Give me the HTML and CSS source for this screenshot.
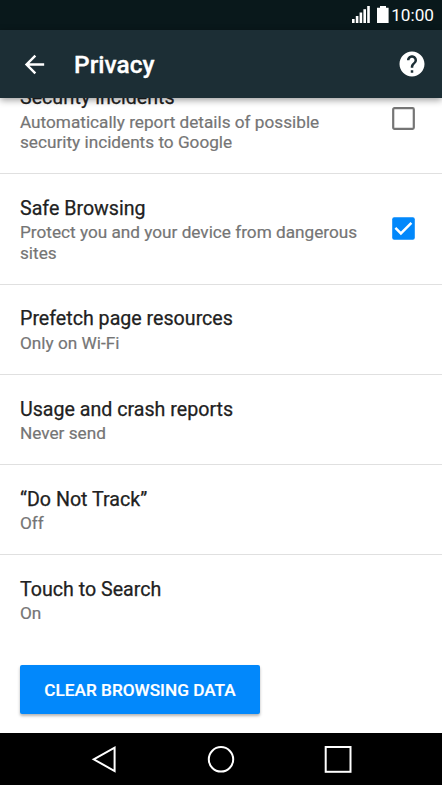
FILE: index.html
```
<!DOCTYPE html>
<html lang="en">
<head>
    <meta charset="UTF-8">
    <meta name="viewport" content="width=device-width, initial-scale=1.0">
    <title>Privacy</title>
    <link rel="stylesheet" href="styles.css">
</head>
<body>
    <div class="statusbar">
        <svg class="signal" width="18" height="17" viewBox="0 0 18 17" fill="#fff">
            <rect x="0" y="13" width="2.6" height="4"/>
            <rect x="3.8" y="10" width="2.6" height="7"/>
            <rect x="7.6" y="6.5" width="2.6" height="10.5"/>
            <rect x="11.4" y="3.2" width="2.6" height="13.8"/>
            <rect x="15.2" y="0" width="2.6" height="17"/>
        </svg>
        <svg class="battery" width="12" height="17" viewBox="0 0 12 17" fill="#fff">
            <path d="M3 0h6v1.8h2.6V17H0V1.8h3z"/>
        </svg>
        <span class="clock">10:00</span>
    </div>

    <header>
        <svg class="back" width="29" height="29" viewBox="0 0 24 24" fill="#fff">
            <path d="M20 11H7.83l5.59-5.59L12 4l-8 8 8 8 1.41-1.41L7.83 13H20v-2z"/>
        </svg>
        <h1>Privacy</h1>
        <svg class="help" width="30" height="30" viewBox="0 0 24 24" fill="#fff">
            <path d="M12 2C6.48 2 2 6.48 2 12s4.48 10 10 10 10-4.48 10-10S17.52 2 12 2zm1 17h-2v-2h2v2zm2.07-7.75l-.9.92C13.45 12.9 13 13.5 13 15h-2v-.5c0-1.1.45-2.1 1.17-2.83l1.24-1.26c.37-.36.59-.86.59-1.41 0-1.1-.9-2-2-2s-2 .9-2 2H8c0-2.21 1.79-4 4-4s4 1.79 4 4c0 .88-.36 1.68-.93 2.25z"/>
        </svg>
    </header>

    <main>
        <div class="list">
            <div class="item tall">
                <div class="text">
                    <h2>Security incidents</h2>
                    <p>Automatically report details of possible security incidents to Google</p>
                </div>
                <svg class="checkbox" width="23" height="23" viewBox="0 0 23 23">
                    <rect x="1.2" y="1.2" width="20.6" height="20.6" rx="1.2" fill="none" stroke="#757575" stroke-width="2.2"/>
                </svg>
            </div>
            <div class="item tall">
                <div class="text">
                    <h2>Safe Browsing</h2>
                    <p>Protect you and your device from dangerous sites</p>
                </div>
                <svg class="checkbox" width="23" height="23" viewBox="0 0 23 23">
                    <rect x="0.2" y="0.2" width="22.6" height="22.6" rx="2" fill="#0288fb"/>
                    <path d="M3.4 10.9l5.5 5.5L19.4 5.9" fill="none" stroke="#fff" stroke-width="2.5"/>
                </svg>
            </div>
            <div class="item">
                <div class="text">
                    <h2>Prefetch page resources</h2>
                    <p>Only on Wi-Fi</p>
                </div>
            </div>
            <div class="item">
                <div class="text">
                    <h2>Usage and crash reports</h2>
                    <p>Never send</p>
                </div>
            </div>
            <div class="item">
                <div class="text">
                    <h2>“Do Not Track”</h2>
                    <p>Off</p>
                </div>
            </div>
            <div class="item last">
                <div class="text">
                    <h2>Touch to Search</h2>
                    <p>On</p>
                </div>
            </div>
        </div>
        <button class="clear">CLEAR BROWSING DATA</button>
    </main>

    <nav>
        <svg width="28" height="30" viewBox="0 0 28 30" fill="none" stroke="#fff" stroke-width="2">
            <path d="M3.7 15.3L24.6 3.6v23.4z"/>
        </svg>
        <svg width="28" height="30" viewBox="0 0 28 30" fill="none" stroke="#fff" stroke-width="2">
            <circle cx="14" cy="15.3" r="12.2"/>
        </svg>
        <svg width="28" height="30" viewBox="0 0 28 30" fill="none" stroke="#fff" stroke-width="2">
            <rect x="1.7" y="3" width="24.8" height="24.8"/>
        </svg>
    </nav>
</body>
</html>
```

FILE: styles.css
```
* {
    box-sizing: border-box;
}
body {
    font-family: Roboto, Arial, sans-serif;
    margin: 0;
    width: 442px;
    height: 785px;
    display: flex;
    flex-direction: column;
    background-color: #fff;
    overflow: hidden;
}

.statusbar {
    height: 30px;
    flex-shrink: 0;
    background-color: #09181b;
    color: #fff;
    display: flex;
    justify-content: flex-end;
    align-items: flex-start;
    padding: 6px 8px 0 0;
}
.battery {
    margin-left: 7px;
}
.clock {
    margin-left: 2px;
    font-size: 17.2px;
    line-height: 19px;
}

header {
    height: 68px;
    flex-shrink: 0;
    display: flex;
    align-items: center;
    padding: 0 15px 0 20px;
    background-color: #1c2e35;
    box-shadow: 0 2px 7px rgba(0, 0, 0, 0.4);
    z-index: 1;
}
header h1 {
    flex: 1;
    margin: 0 0 0 25px;
    color: #fff;
    font-size: 24.5px;
    font-weight: 500;
    -webkit-text-stroke: 0.3px;
}

main {
    flex: 1;
    min-height: 0;
    overflow: hidden;
}
/* scrolled so that the first item is partly under the header */
.list {
    margin-top: -34.4px;
}
.item {
    height: 90.1px;
    padding: 22.8px 27.5px 0 20px;
    display: flex;
    justify-content: space-between;
    border-bottom: 1px solid #e0e0e0;
}
.item.tall {
    height: 110.5px;
}
.item.last {
    border-bottom: none;
}
.item h2 {
    margin: 0;
    color: #212121;
    font-size: 19.64px;
    font-weight: 400;
    line-height: 24px;
    -webkit-text-stroke: 0.25px;
}
.item p {
    margin: 1.4px 0 0;
    color: #757575;
    font-size: 17.19px;
    line-height: 20.6px;
    -webkit-text-stroke: 0.2px;
}
.text {
    max-width: 345px;
}
.checkbox {
    flex-shrink: 0;
    margin-top: 20.2px;
}

.clear {
    display: block;
    width: 240px;
    height: 49px;
    margin: 20px 0 0 20px;
    padding: 1px 0 0;
    border: none;
    border-radius: 2px;
    background-color: #0288fb;
    box-shadow: 0 2px 3px rgba(0, 0, 0, 0.3);
    color: #fff;
    font-family: inherit;
    font-size: 17.19px;
    font-weight: 500;
    -webkit-text-stroke: 0.2px;
}

nav {
    height: 52px;
    flex-shrink: 0;
    display: flex;
    justify-content: center;
    align-items: center;
    gap: 89px;
    background-color: #000;
}
```
